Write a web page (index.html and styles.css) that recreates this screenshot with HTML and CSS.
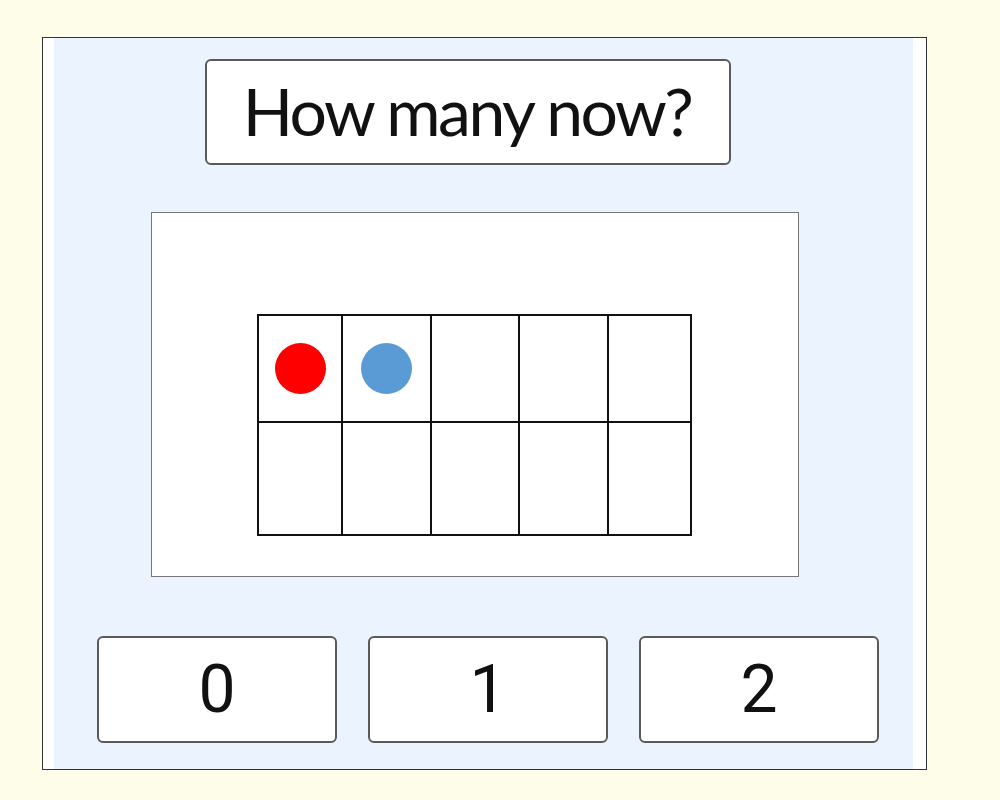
FILE: index.html
```html
<!DOCTYPE html>
<html>
<head>
<meta charset="utf-8">
<link rel="stylesheet" href="styles.css">
</head>
<body>
<div class="panel">
  <div class="stage">
    <div class="title">How many now?</div>
    <div class="picture">
      <table class="frame">
        <tr>
          <td class="c1"><span class="dot red"></span></td>
          <td class="c2"><span class="dot blue"></span></td>
          <td class="c3"></td>
          <td class="c4"></td>
          <td class="c5"></td>
        </tr>
        <tr class="r2">
          <td></td><td></td><td></td><td></td><td></td>
        </tr>
      </table>
    </div>
    <div class="answers">
      <div class="answer">0</div>
      <div class="answer">1</div>
      <div class="answer">2</div>
    </div>
  </div>
</div>
</body>
</html>
```
FILE: styles.css
```css
html, body {
  margin: 0;
  padding: 0;
  background: #fdfde9;
}
body {
  width: 1000px;
  height: 800px;
  overflow: hidden;
}
.panel {
  margin: 37px 0 0 42px;
  width: 859px;
  height: 731px;
  border: 1px solid #333;
  background: #ffffff;
  padding: 0 13px 0 11px;
  box-sizing: content-box;
}
.stage {
  background: #eaf3fe;
  height: 731px;
  display: flex;
  flex-direction: column;
  align-items: flex-start;
}
.title {
  margin: 21px 0 0 151px;
  width: 526px;
  height: 106px;
  box-sizing: border-box;
  border: 2px solid #5a5a5a;
  border-radius: 6px;
  background: #fff;
  display: flex;
  align-items: center;
  justify-content: center;
  font-family: Lato, sans-serif;
  font-size: 66px;
  letter-spacing: -2.5px;
  color: #111;
  padding-bottom: 4px;
  padding-right: 2px;
}
.picture {
  margin: 47px 0 0 97px;
  width: 648px;
  height: 365px;
  box-sizing: border-box;
  border: 1px solid #777;
  background: #fff;
  padding: 101px 0 0 105px;
}
.frame {
  border-collapse: collapse;
}
.frame td {
  border: 2px solid #111;
  padding: 0;
  height: 105px;
  text-align: center;
  vertical-align: middle;
}
.frame .r2 td {
  height: 111px;
}
.frame .c1 { width: 82px; }
.frame .c2 { width: 87px; }
.frame .c3 { width: 86px; }
.frame .c4 { width: 87px; }
.frame .c5 { width: 81px; }
.dot {
  display: inline-block;
  width: 51px;
  height: 51px;
  border-radius: 50%;
  vertical-align: middle;
}
.red { background: #ff0000; }
.blue { background: #5b9bd5; }
.answers {
  margin: 59px 0 0 43px;
  display: flex;
  gap: 31px;
}
.answer {
  width: 240px;
  height: 107px;
  box-sizing: border-box;
  border: 2px solid #5a5a5a;
  border-radius: 6px;
  background: #fff;
  display: flex;
  align-items: center;
  justify-content: center;
  font-family: Roboto, sans-serif;
  font-size: 66px;
  color: #111;
}
```
